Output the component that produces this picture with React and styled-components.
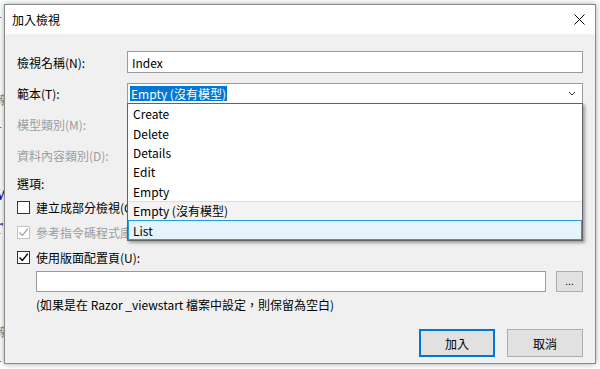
import React from "react";
import styled, { createGlobalStyle } from "styled-components";

const Global = createGlobalStyle`
  * { box-sizing: border-box; }
  body {
    margin: 0;
    background: #fff;
    font-family: "Segoe UI", "Noto Sans CJK TC", "Noto Sans", sans-serif;
    font-size: 12px;
    color: #000;
  }
`;

const Page = styled.div`
  position: relative;
  width: 600px;
  height: 369px;
  overflow: hidden;
  background: #fff;
`;

const BackText = styled.div`
  display: flex;
  flex-direction: column;
  font-family: "Liberation Serif", serif;
  font-size: 24px;
  line-height: 1;
`;

const BackLine = styled.div`
  height: ${p => p.h}px;
  display: flex;
  align-items: flex-end;
  overflow: hidden;
  margin-left: -5px;
  color: ${p => p.c || "#1a0dab"};
  font-size: ${p => p.fs || 24}px;
`;

const Dialog = styled.div`
  position: absolute;
  left: 4px;
  top: 4px;
  width: 592px;
  height: 360px;
  display: flex;
  flex-direction: column;
  background: #f0f0f0;
  border: 1px solid #8a8a8a;
  box-shadow: 0 0 6px rgba(0, 0, 0, 0.35);
`;

const TitleBar = styled.div`
  height: 29px;
  display: flex;
  align-items: center;
  justify-content: space-between;
  padding: 0 10px 0 7px;
  background: #fff;
  font-family: "Noto Sans CJK TC", sans-serif;
`;

const Body = styled.div`
  flex: 1;
  display: flex;
  flex-direction: column;
  padding: 17px 12px 6px 12px;
`;

const FieldRow = styled.div`
  height: 22px;
  display: flex;
  align-items: center;
  margin-bottom: 9px;
  position: relative;
`;

const Label = styled.div`
  width: 110px;
  flex-shrink: 0;
  color: ${p => (p.disabled ? "#9d9d9d" : "#000")};
`;

const TextBox = styled.div`
  flex: 1;
  height: ${p => p.h || 22}px;
  display: flex;
  align-items: center;
  padding-left: 4px;
  background: #fff;
  border: 1px solid #9a9a9a;
`;

const Combo = styled(TextBox)`
  height: 21px;
  padding-left: 2px;
  justify-content: space-between;
  padding-right: 6px;
`;

const Selected = styled.span`
  background: #0078d7;
  color: #fff;
  padding: 0 1px;
  line-height: 15px;
`;

const DropList = styled.div`
  position: absolute;
  left: 110px;
  right: 0;
  top: 21px;
  background: #fff;
  border: 1px solid #646464;
  box-shadow: 2px 2px 3px rgba(0, 0, 0, 0.35);
  z-index: 2;
`;

const Item = styled.div`
  height: 19.4px;
  display: flex;
  align-items: center;
  padding-left: 4px;
  background: ${p => (p.hot ? "#e5f3fb" : p.soft ? "#f3f3f3" : "#fff")};
  border: 1px solid ${p => (p.hot ? "#26a0da" : "transparent")};
  border-top-color: ${p => (p.hot ? "#26a0da" : p.soft ? "#dedede" : "transparent")};
`;

const Section = styled.div`
  height: 16px;
  display: flex;
  align-items: center;
  margin-bottom: 10px;
`;

const Checks = styled.div`
  display: flex;
  flex-direction: column;
  gap: 12px;
`;

const CheckRow = styled.div`
  height: 13px;
  display: flex;
  align-items: center;
  gap: 6px;
  color: ${p => (p.disabled ? "#9d9d9d" : "#000")};
`;

const Box = styled.div`
  width: 13px;
  height: 13px;
  flex-shrink: 0;
  display: flex;
  align-items: center;
  justify-content: center;
  background: #fff;
  border: 1px solid ${p => (p.disabled ? "#c4c4c4" : "#333")};
`;

const LayoutRow = styled.div`
  display: flex;
  align-items: center;
  gap: 10px;
  margin: 7px 0 0 19px;
`;

const SmallButton = styled.div`
  width: 27px;
  height: 21px;
  display: flex;
  align-items: center;
  justify-content: center;
  background: #e1e1e1;
  border: 1px solid #adadad;
  font-size: 10px;
  line-height: 10px;
  padding-bottom: 2px;
`;

const Hint = styled.div`
  margin: 4px 0 0 19px;
  height: 16px;
  display: flex;
  align-items: center;
`;

const Footer = styled.div`
  margin-top: auto;
  display: flex;
  justify-content: flex-end;
  gap: 12px;
`;

const Button = styled.div`
  width: 76px;
  height: 28px;
  display: flex;
  align-items: center;
  justify-content: center;
  background: #e1e1e1;
  border: 1px solid ${p => (p.primary ? "#0078d7" : "#adadad")};
  box-shadow: ${p => (p.primary ? "inset 0 0 0 1px #0078d7" : "none")};
  font-family: "Noto Sans CJK TC", sans-serif;
`;

const Check = ({ color }) => (
  <svg width="11" height="11" viewBox="0 0 11 11">
    <path d="M1.5 5.5 L4.3 8.5 L9.8 1.8" fill="none" stroke={color} strokeWidth="1.4" />
  </svg>
);

const Close = () => (
  <svg width="11" height="11" viewBox="0 0 11 11">
    <path d="M0.5 0.5 L10.5 10.5 M10.5 0.5 L0.5 10.5" stroke="#000" strokeWidth="1" />
  </svg>
);

const Chevron = () => (
  <svg width="8" height="5" viewBox="0 0 8 5">
    <path d="M1 1 L4 4 L7 1" fill="none" stroke="#333" strokeWidth="1" />
  </svg>
);

const templates = ["Create", "Delete", "Details", "Edit", "Empty", "Empty (沒有模型)", "List"];

export default function App() {
  return (
    <Page>
      <Global />
      <BackText>
        <BackLine h={22}>l</BackLine>
        <BackLine h={84} c="#777" fs={12}>等</BackLine>
        <BackLine h={26}>i</BackLine>
        <BackLine h={72}>w</BackLine>
        <BackLine h={34} c="#551a8b">r</BackLine>
        <BackLine h={100} c="#777" fs={12}>等</BackLine>
        <BackLine h={28}>i</BackLine>
      </BackText>
      <Dialog>
        <TitleBar>
          <span>加入檢視</span>
          <Close />
        </TitleBar>
        <Body>
          <FieldRow>
            <Label>檢視名稱(N):</Label>
            <TextBox>Index</TextBox>
          </FieldRow>
          <FieldRow>
            <Label>範本(T):</Label>
            <Combo>
              <Selected>Empty (沒有模型)</Selected>
              <Chevron />
            </Combo>
            <DropList>
              {templates.map((t, i) => (
                <Item key={t} soft={i === 5} hot={i === 6}>
                  {t}
                </Item>
              ))}
            </DropList>
          </FieldRow>
          <FieldRow>
            <Label disabled>模型類別(M):</Label>
          </FieldRow>
          <FieldRow>
            <Label disabled>資料內容類別(D):</Label>
          </FieldRow>
          <Section>選項:</Section>
          <Checks>
            <CheckRow>
              <Box />
              建立成部分檢視(C)
            </CheckRow>
            <CheckRow disabled>
              <Box disabled>
                <Check color="#a8a8a8" />
              </Box>
              參考指令碼程式庫(R)
            </CheckRow>
            <CheckRow>
              <Box>
                <Check color="#000" />
              </Box>
              使用版面配置頁(U):
            </CheckRow>
          </Checks>
          <LayoutRow>
            <TextBox h={21} />
            <SmallButton>...</SmallButton>
          </LayoutRow>
          <Hint>(如果是在 Razor _viewstart 檔案中設定，則保留為空白)</Hint>
          <Footer>
            <Button primary>加入</Button>
            <Button>取消</Button>
          </Footer>
        </Body>
      </Dialog>
    </Page>
  );
}
